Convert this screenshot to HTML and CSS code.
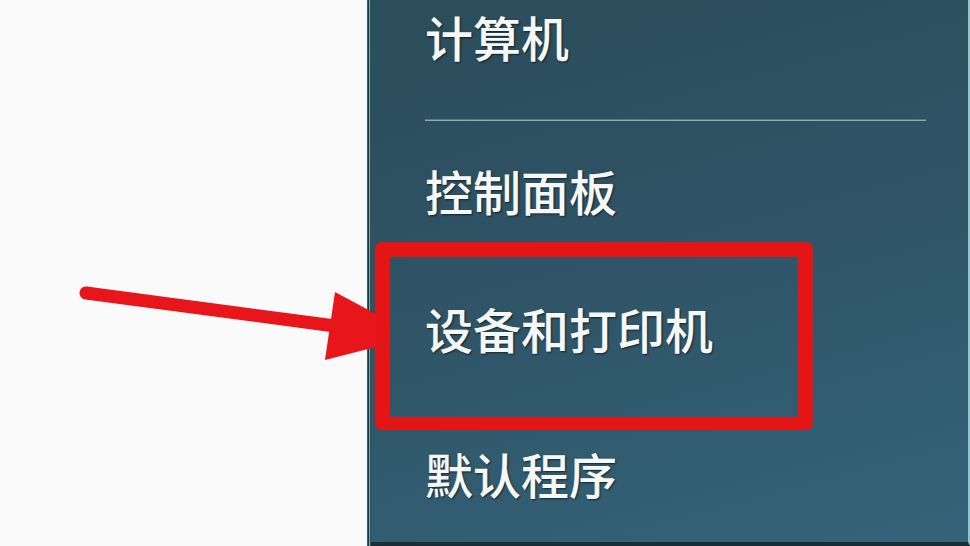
FILE: index.html
```html
<!DOCTYPE html>
<html lang="zh-CN">
<head>
<meta charset="utf-8">
<title>开始菜单</title>
<link rel="stylesheet" href="styles.css">
</head>
<body>
<div class="screen">
  <div class="left-pane"></div>
  <div class="divider"></div>
  <div class="right-pane">
    <ul class="menu">
      <li class="item item-first">计算机</li>
      <li class="sep"></li>
      <li class="item item-second">控制面板</li>
      <li class="item item-hl">设备和打印机</li>
      <li class="item item-last">默认程序</li>
    </ul>
  </div>
  <svg class="arrow" width="970" height="546" viewBox="0 0 970 546" aria-hidden="true">
    <line x1="86" y1="293" x2="335" y2="326" stroke="#e8151b" stroke-width="13" stroke-linecap="round"/>
    <polygon points="335,292 376,314 376,347 325,360" fill="#e8151b"/>
  </svg>
</div>
</body>
</html>
```
FILE: styles.css
```css
html, body {
  margin: 0;
  padding: 0;
}
body {
  width: 970px;
  height: 546px;
  overflow: hidden;
  font-family: "Noto Sans CJK SC", "Noto Sans", sans-serif;
}
.screen {
  position: relative;
  display: flex;
  width: 970px;
  height: 546px;
}
.left-pane {
  width: 367px;
  background: #fafafa;
}
.divider {
  width: 4px;
  background: linear-gradient(to right, #3e5f66 0, #3e5f66 1px, #1c3640 1px, #1c3640 2px, #78aeb0 2px, #78aeb0 3px, #2c4f5e 3px);
}
.right-pane {
  flex: 1;
  background: linear-gradient(165deg, #2b4c5b 0%, #2f5566 50%, #34647a 100%);
  border-right: 2px solid #8cc6cc;
  border-bottom: 4px solid #1a2e38;
  padding-left: 4px;
}
.menu {
  list-style: none;
  margin: 0;
  padding: 0;
}
.item {
  color: #f6f8f8;
  font-size: 48px;
  font-weight: 500;
  line-height: 60px;
  height: 60px;
  padding-left: 50px;
  text-shadow: 1px 1px 2px rgba(0, 0, 0, 0.6);
}
.item-first {
  margin-top: 6px;
}
.sep {
  height: 2px;
  width: 501px;
  margin: 53px 0 0 50px;
  background: linear-gradient(to bottom, #5d7880 0, #5d7880 1px, #97aab0 1px);
}
.item-second {
  margin-top: 39px;
}
.item-hl {
  width: 373px;
  height: 60px;
  margin-top: 22px;
  padding: 41px 0 59px 35px;
  border: 15px solid #e31515;
  border-bottom-width: 13px;
  border-radius: 7px;
}
.item-last {
  margin-top: 13px;
}
.arrow {
  position: absolute;
  left: 0;
  top: 0;
  pointer-events: none;
}
```
